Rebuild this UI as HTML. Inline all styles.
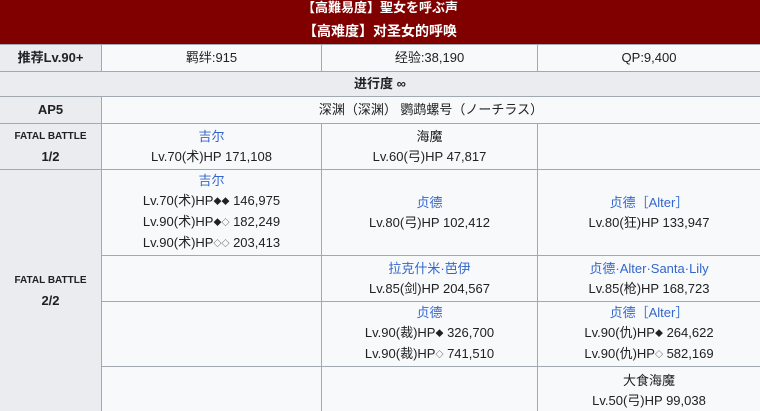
<!DOCTYPE html>
<html style="overflow:hidden"><head><meta charset="utf-8"><style>
html,body{margin:0;width:760px;height:411px;overflow:hidden}
body{background:#a2a9b1;font-family:"Liberation Sans","Noto Sans CJK SC",sans-serif;font-size:13px;color:#202122;position:relative}
.c{position:absolute;display:flex;flex-direction:column;align-items:center;justify-content:center;text-align:center;line-height:20px;background:#f8f9fa}
.g{background:#eaecf0;font-weight:bold}
.h{position:absolute;left:0;top:0;width:760px;height:44px;background:#800000;color:#fff;font-weight:bold;font-size:14px;text-align:center}
a{color:#3366cc;text-decoration:none}
.s{font-size:10px}
.d{font-size:8px;vertical-align:1px}
</style></head><body>
<div class="h"><div style="position:absolute;top:0;width:100%;line-height:16px;font-size:13px">【高難易度】聖女を呼ぶ声</div><div style="position:absolute;top:21px;width:100%;line-height:20px">【高难度】对圣女的呼唤</div></div>

<div class="c g" style="left:0;top:45px;width:101px;height:26px">推荐Lv.90+</div>
<div class="c" style="left:102px;top:45px;width:219px;height:26px">羁绊:915</div>
<div class="c" style="left:322px;top:45px;width:215px;height:26px">经验:38,190</div>
<div class="c" style="left:538px;top:45px;width:222px;height:26px">QP:9,400</div>

<div class="c g" style="left:0;top:72px;width:760px;height:24px">进行度 ∞</div>

<div class="c g" style="left:0;top:97px;width:101px;height:26px">AP5</div>
<div class="c" style="left:102px;top:97px;width:658px;height:26px">深渊（深渊） 鹦鹉螺号（ノーチラス）</div>

<div class="c g" style="left:0;top:124px;width:101px;height:45px"><span class="s">FATAL BATTLE</span><span>1/2</span></div>
<div class="c" style="left:102px;top:124px;width:219px;height:45px"><a>吉尔</a><span>Lv.70(术)HP 171,108</span></div>
<div class="c" style="left:322px;top:124px;width:215px;height:45px"><span>海魔</span><span>Lv.60(弓)HP 47,817</span></div>
<div class="c" style="left:538px;top:124px;width:222px;height:45px"></div>

<div class="c g" style="left:0;top:170px;width:101px;height:241px"><span class="s">FATAL BATTLE</span><span>2/2</span></div>
<div class="c" style="left:102px;top:170px;width:219px;height:85px"><a>吉尔</a><span>Lv.70(术)HP<span class="d">◆◆</span> 146,975</span><span>Lv.90(术)HP<span class="d">◆◇</span> 182,249</span><span>Lv.90(术)HP<span class="d">◇◇</span> 203,413</span></div>
<div class="c" style="left:322px;top:170px;width:215px;height:85px"><a>贞德</a><span>Lv.80(弓)HP 102,412</span></div>
<div class="c" style="left:538px;top:170px;width:222px;height:85px"><a>贞德［Alter］</a><span>Lv.80(狂)HP 133,947</span></div>

<div class="c" style="left:102px;top:256px;width:219px;height:45px"></div>
<div class="c" style="left:322px;top:256px;width:215px;height:45px"><a>拉克什米·芭伊</a><span>Lv.85(剑)HP 204,567</span></div>
<div class="c" style="left:538px;top:256px;width:222px;height:45px"><a>贞德·Alter·Santa·Lily</a><span>Lv.85(枪)HP 168,723</span></div>

<div class="c" style="left:102px;top:302px;width:219px;height:64px"></div>
<div class="c" style="left:322px;top:302px;width:215px;height:64px"><a>贞德</a><span>Lv.90(裁)HP<span class="d">◆</span> 326,700</span><span>Lv.90(裁)HP<span class="d">◇</span> 741,510</span></div>
<div class="c" style="left:538px;top:302px;width:222px;height:64px"><a>贞德［Alter］</a><span>Lv.90(仇)HP<span class="d">◆</span> 264,622</span><span>Lv.90(仇)HP<span class="d">◇</span> 582,169</span></div>

<div class="c" style="left:102px;top:367px;width:219px;height:44px"></div>
<div class="c" style="left:322px;top:367px;width:215px;height:44px"></div>
<div class="c" style="left:538px;top:367px;width:222px;height:44px;justify-content:flex-start;padding-top:4px"><span>大食海魔</span><span>Lv.50(弓)HP 99,038</span></div>
</body></html>
